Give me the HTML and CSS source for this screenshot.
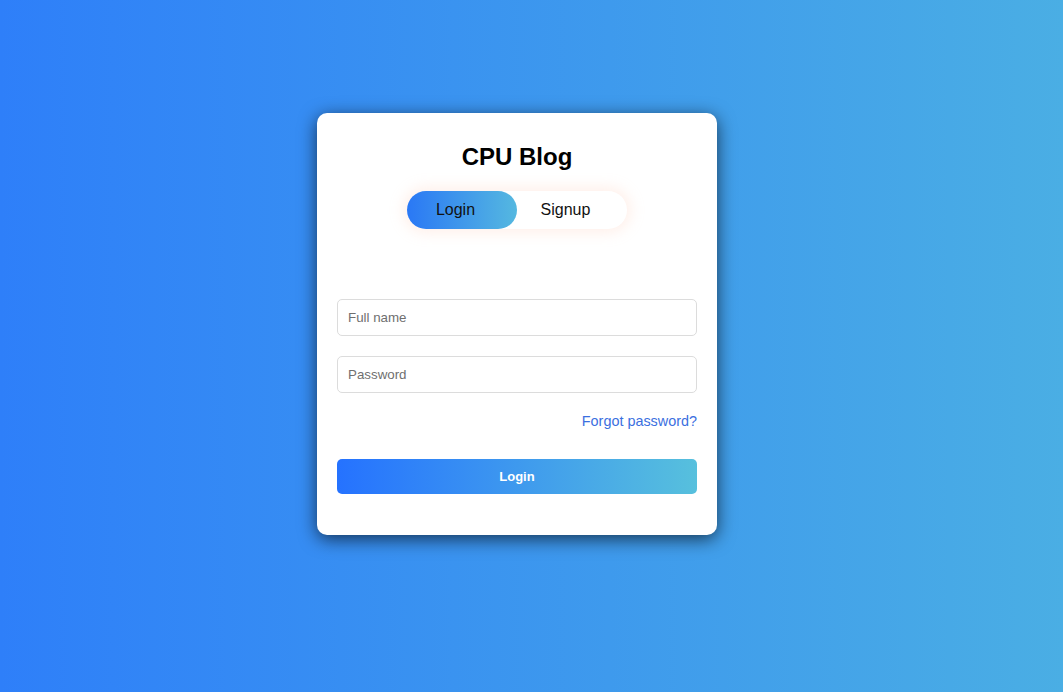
FILE: index.html
```html
<!DOCTYPE html>
<html lang="en">
<head>
<meta charset="utf-8">
<title>CPU Blog</title>
<link rel="stylesheet" href="styles.css">
</head>
<body>
<div class="page">
  <div class="card">
    <h1 class="title">CPU Blog</h1>
    <div class="toggle">
      <button class="tab active">Login</button>
      <button class="tab">Signup</button>
    </div>
    <form class="form">
      <input class="field" type="text" placeholder="Full name">
      <input class="field" type="password" placeholder="Password">
      <div class="forgot-row"><a class="forgot" href="#">Forgot password?</a></div>
      <button class="submit" type="button">Login</button>
    </form>
  </div>
</div>
</body>
</html>
```
FILE: styles.css
```css
* { box-sizing: border-box; }
html, body { margin: 0; height: 100%; }
body {
  font-family: "Liberation Sans", Arial, sans-serif;
  background: linear-gradient(to right, #2e7ff9, #4aaee4);
}
.page {
  min-height: 100%;
  padding: 113px 0 0 317px;
}
.card {
  width: 400px;
  height: 422px;
  background: #fff;
  border-radius: 10px;
  padding: 30px 20px 0;
  box-shadow: 0 4px 18px rgba(0, 0, 0, 0.65);
  display: flex;
  flex-direction: column;
  align-items: center;
}
.title {
  margin: 0;
  font-size: 24px;
  line-height: 28px;
  font-weight: bold;
  color: #000;
}
.toggle {
  margin-top: 20px;
  width: 220px;
  height: 38px;
  display: flex;
  border-radius: 19px;
  background: #fff;
  box-shadow: 0 0 14px 4px rgba(255, 200, 180, 0.28);
}
.tab {
  flex: 1;
  border: none;
  background: transparent;
  border-radius: 19px;
  font-family: inherit;
  font-size: 16px;
  color: #111;
  padding: 0 13px 0 0;
}
.tab.active {
  background: linear-gradient(to right, #2a78f5, #55b8e0);
}
.form {
  width: 100%;
  margin-top: 70px;
  display: flex;
  flex-direction: column;
}
.field {
  height: 37px;
  border: 1px solid #dcdcdc;
  border-radius: 5px;
  padding: 0 10px;
  font-family: inherit;
  font-size: 13.33px;
  color: #333;
  margin-bottom: 20px;
  outline: none;
}
.field::placeholder { color: #6f6f6f; }
.forgot-row {
  display: flex;
  justify-content: flex-end;
  margin-top: -1px;
}
.forgot {
  font-size: 14.4px;
  line-height: 18px;
  color: #3b6fe0;
  text-decoration: none;
}
.submit {
  margin-top: 29px;
  height: 35px;
  border: none;
  border-radius: 5px;
  background: linear-gradient(to right, #2572ff, #57c0dd);
  color: #fff;
  font-family: inherit;
  font-weight: bold;
  font-size: 13px;
}
```
